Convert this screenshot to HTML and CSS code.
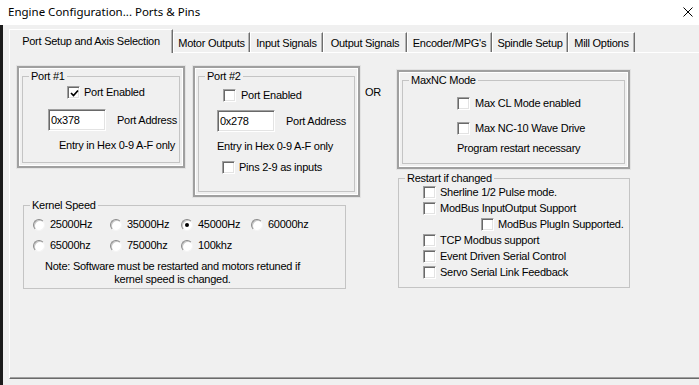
FILE: index.html
```html
<!DOCTYPE html>
<html>
<head>
<meta charset="utf-8">
<link rel="stylesheet" href="styles.css">
</head>
<body>
<div class="titlebar">
  <span class="title">Engine Configuration... Ports &amp; Pins</span>
  <svg class="close" width="10" height="10" viewBox="0 0 10 10"><path d="M0.5 0.5 L9.5 9.5 M9.5 0.5 L0.5 9.5" stroke="#000" stroke-width="1" fill="none"/></svg>
</div>
<div class="client">
  <div class="tabctl">
    <div class="tabs">
      <div class="tab sel t1">Port Setup and Axis Selection</div>
      <div class="tab t2">Motor Outputs</div>
      <div class="tab t3">Input Signals</div>
      <div class="tab t4">Output Signals</div>
      <div class="tab t5">Encoder/MPG's</div>
      <div class="tab t6">Spindle Setup</div>
      <div class="tab t7">Mill Options</div>
    </div>
    <div class="panel">
      <div class="col-left">
        <div class="ports">
          <div class="frame f1">
            <div class="group">
              <span class="gtitle">Port #1</span>
              <div class="row p1-en"><span class="cb"><svg width="9" height="9" viewBox="0 0 9 9"><path d="M1 4 L3.5 6.5 L8 1.5" stroke="#000" stroke-width="1.7" fill="none"/></svg></span><span class="lbl">Port Enabled</span></div>
              <div class="row p1-addr"><span class="tb">0x378</span><span class="lbl addr">Port Address</span></div>
              <div class="row p1-hex">Entry in Hex 0-9 A-F only</div>
            </div>
          </div>
          <div class="frame f2">
            <div class="group">
              <span class="gtitle">Port #2</span>
              <div class="row p2-en"><span class="cb"></span><span class="lbl gap5">Port Enabled</span></div>
              <div class="row p2-addr"><span class="tb">0x278</span><span class="lbl addr">Port Address</span></div>
              <div class="row p2-hex">Entry in Hex 0-9 A-F only</div>
              <div class="row p2-pins"><span class="cb"></span><span class="lbl">Pins 2-9 as inputs</span></div>
            </div>
          </div>
        </div>
        <div class="group kernel">
          <span class="gtitle">Kernel Speed</span>
          <div class="radios">
            <div class="rad"><span class="rb"></span>25000Hz</div>
            <div class="rad"><span class="rb"></span>35000Hz</div>
            <div class="rad"><span class="rb on"></span>45000Hz</div>
            <div class="rad"><span class="rb"></span>60000hz</div>
            <div class="rad"><span class="rb"></span>65000hz</div>
            <div class="rad"><span class="rb"></span>75000hz</div>
            <div class="rad"><span class="rb"></span>100khz</div>
          </div>
          <div class="note">Note: Software must be restarted and motors retuned if<br>kernel speed is changed.</div>
        </div>
      </div>
      <div class="or">OR</div>
      <div class="col-right">
        <div class="frame f3">
          <div class="group">
            <span class="gtitle">MaxNC Mode</span>
            <div class="row m-cl"><span class="cb"></span><span class="lbl gap5">Max CL Mode enabled</span></div>
            <div class="row m-wd"><span class="cb"></span><span class="lbl gap5">Max NC-10 Wave Drive</span></div>
            <div class="row m-note">Program restart necessary</div>
          </div>
        </div>
        <div class="group restart">
          <span class="gtitle">Restart if changed</span>
          <div class="rrow"><span class="cb"></span><span class="lbl">Sherline 1/2 Pulse mode.</span></div>
          <div class="rrow"><span class="cb"></span><span class="lbl">ModBus InputOutput Support</span></div>
          <div class="rrow sub"><span class="cb"></span><span class="lbl">ModBus PlugIn Supported.</span></div>
          <div class="rrow"><span class="cb"></span><span class="lbl">TCP Modbus support</span></div>
          <div class="rrow"><span class="cb"></span><span class="lbl">Event Driven Serial Control</span></div>
          <div class="rrow"><span class="cb"></span><span class="lbl">Servo Serial Link Feedback</span></div>
        </div>
      </div>
    </div>
  </div>
</div>
</body>
</html>
```

FILE: styles.css
```css
* { box-sizing: border-box; }
html, body { margin: 0; padding: 0; }
body {
  width: 699px;
  height: 385px;
  overflow: hidden;
  background: #f0f0f0;
  font-family: "Liberation Sans", Arial, sans-serif;
  font-size: 11px;
  letter-spacing: -0.25px;
  color: #000;
}
.titlebar {
  height: 25px;
  background: #fff;
  display: flex;
  align-items: center;
  justify-content: space-between;
  padding: 0 6px 2px 8px;
}
.title {
  font-family: "Noto Sans", "Open Sans", sans-serif;
  font-size: 11.5px;
  letter-spacing: 0;
}
.close { display: block; }
.client {
  height: 360px;
  border-left: 3px solid #1c1c1c;
  padding-left: 6px;
  padding-top: 4px;
}
.tabs {
  display: flex;
  align-items: flex-end;
  height: 23px;
}
.tab {
  height: 20px;
  display: flex;
  align-items: center;
  justify-content: center;
  border-left: 1px solid #fff;
  border-top: 1px solid #fff;
  border-right: 1px solid #6e6e6e;
  box-shadow: inset -1px 0 0 #b4b4b4;
  line-height: 13px;
  padding-top: 1px;
}
.tab.sel {
  height: 24px;
  margin-bottom: -1px;
  background: #f0f0f0;
  position: relative;
  z-index: 1;
  padding-top: 0;
  padding-bottom: 1px;
}
.t1 { width: 164px; }
.t2 { width: 77px; }
.t3 { width: 73px; }
.t4 { width: 84px; }
.t5 { width: 85px; }
.t6 { width: 76px; }
.t7 { width: 67px; }
.panel {
  height: 327px;
  border-top: 1px solid #fff;
  border-left: 1px solid #fff;
  border-bottom: 1px solid #6a6a6a;
  box-shadow: inset 0 -1px 0 #a0a0a0;
  padding: 13px 0 0 7px;
  display: flex;
  align-items: flex-start;
}
.col-left { display: flex; flex-direction: column; }
.ports { display: flex; gap: 8px; align-items: flex-start; }
.frame {
  border: 2px solid #a0a0a0;
  box-shadow: inset 0 0 0 1px #fff, 0 0 0 1px #e3e3e3;
  padding: 3px;
  display: flex;
  flex-direction: column;
}
.frame > .group { flex: 1; margin-top: 5px; }
.f1 { width: 168px; height: 102px; }
.f2 { width: 167px; height: 131px; }
.f3 { width: 233px; height: 99px; margin-top: 4px; }
.group {
  position: relative;
  border: 1px solid #c4c4c4;
  line-height: 13px;
}
.gtitle {
  position: absolute;
  top: -7px;
  left: 6px;
  padding: 0 2px;
  background: #f0f0f0;
  line-height: 13px;
  white-space: nowrap;
}
.row { display: flex; align-items: center; line-height: 13px; white-space: nowrap; }
.lbl { margin-left: 4px; }
.lbl.gap5 { margin-left: 5px; }
.lbl.addr { margin-left: 11px; }
.cb {
  width: 13px;
  height: 13px;
  flex: none;
  background: #fff;
  border: 1px solid;
  border-color: #a0a0a0 #fff #fff #a0a0a0;
  box-shadow: inset 1px 1px 0 #696969, inset -1px -1px 0 #e3e3e3;
  display: flex;
  align-items: center;
  justify-content: center;
  padding: 1px 0 0 1px;
}
.cb svg { display: block; }
.tb {
  width: 58px;
  height: 22px;
  background: #fff;
  border: 1px solid;
  border-color: #a0a0a0 #fff #fff #a0a0a0;
  box-shadow: inset 1px 1px 0 #696969, inset -1px -1px 0 #e3e3e3;
  padding: 0 0 0 2px;
  display: flex;
  align-items: center;
}
.p1-en { margin-top: 9px; padding-left: 44px; }
.p1-addr { margin-top: 10px; padding-left: 25px; }
.p1-hex { margin-top: 8px; padding-left: 36px; }
.p2-en { margin-top: 12px; padding-left: 24px; }
.p2-addr { margin-top: 8px; padding-left: 18px; }
.p2-hex { margin-top: 8px; padding-left: 18px; }
.p2-pins { margin-top: 8px; padding-left: 23px; }
.kernel {
  margin-top: 8px;
  margin-left: 6px;
  width: 323px;
  height: 84px;
}
.radios {
  display: grid;
  grid-template-columns: 77px 71px 70px auto;
  row-gap: 8px;
  padding-left: 9px;
  margin-top: 12px;
}
.rad { display: flex; align-items: center; height: 13px; white-space: nowrap; }
.rb {
  width: 12px;
  height: 12px;
  border-radius: 50%;
  background: #fff;
  border: 1px solid;
  border-color: #8a8a8a #f4f4f4 #f4f4f4 #8a8a8a;
  box-shadow: inset 1px 1px 0 #c8c8c8;
  margin-right: 5px;
  display: flex;
  align-items: center;
  justify-content: center;
  flex: none;
}
.rb.on::after {
  content: "";
  width: 4px;
  height: 4px;
  border-radius: 50%;
  background: #000;
}
.note {
  margin-top: 8px;
  text-align: center;
  margin-right: 24px;
  line-height: 13px;
}
.or {
  width: 32px;
  margin-left: 5px;
  margin-top: 20px;
  line-height: 13px;
}
.col-right { display: flex; flex-direction: column; }
.m-cl { margin-top: 16px; padding-left: 54px; }
.m-wd { margin-top: 12px; padding-left: 54px; }
.m-note { margin-top: 7px; padding-left: 54px; }
.restart {
  margin-top: 9px;
  margin-left: 1px;
  width: 232px;
  height: 110px;
  padding-top: 5px;
}
.rrow {
  height: 16px;
  display: flex;
  align-items: center;
  padding-left: 24px;
  white-space: nowrap;
}
.rrow.sub { padding-left: 82px; }
```
